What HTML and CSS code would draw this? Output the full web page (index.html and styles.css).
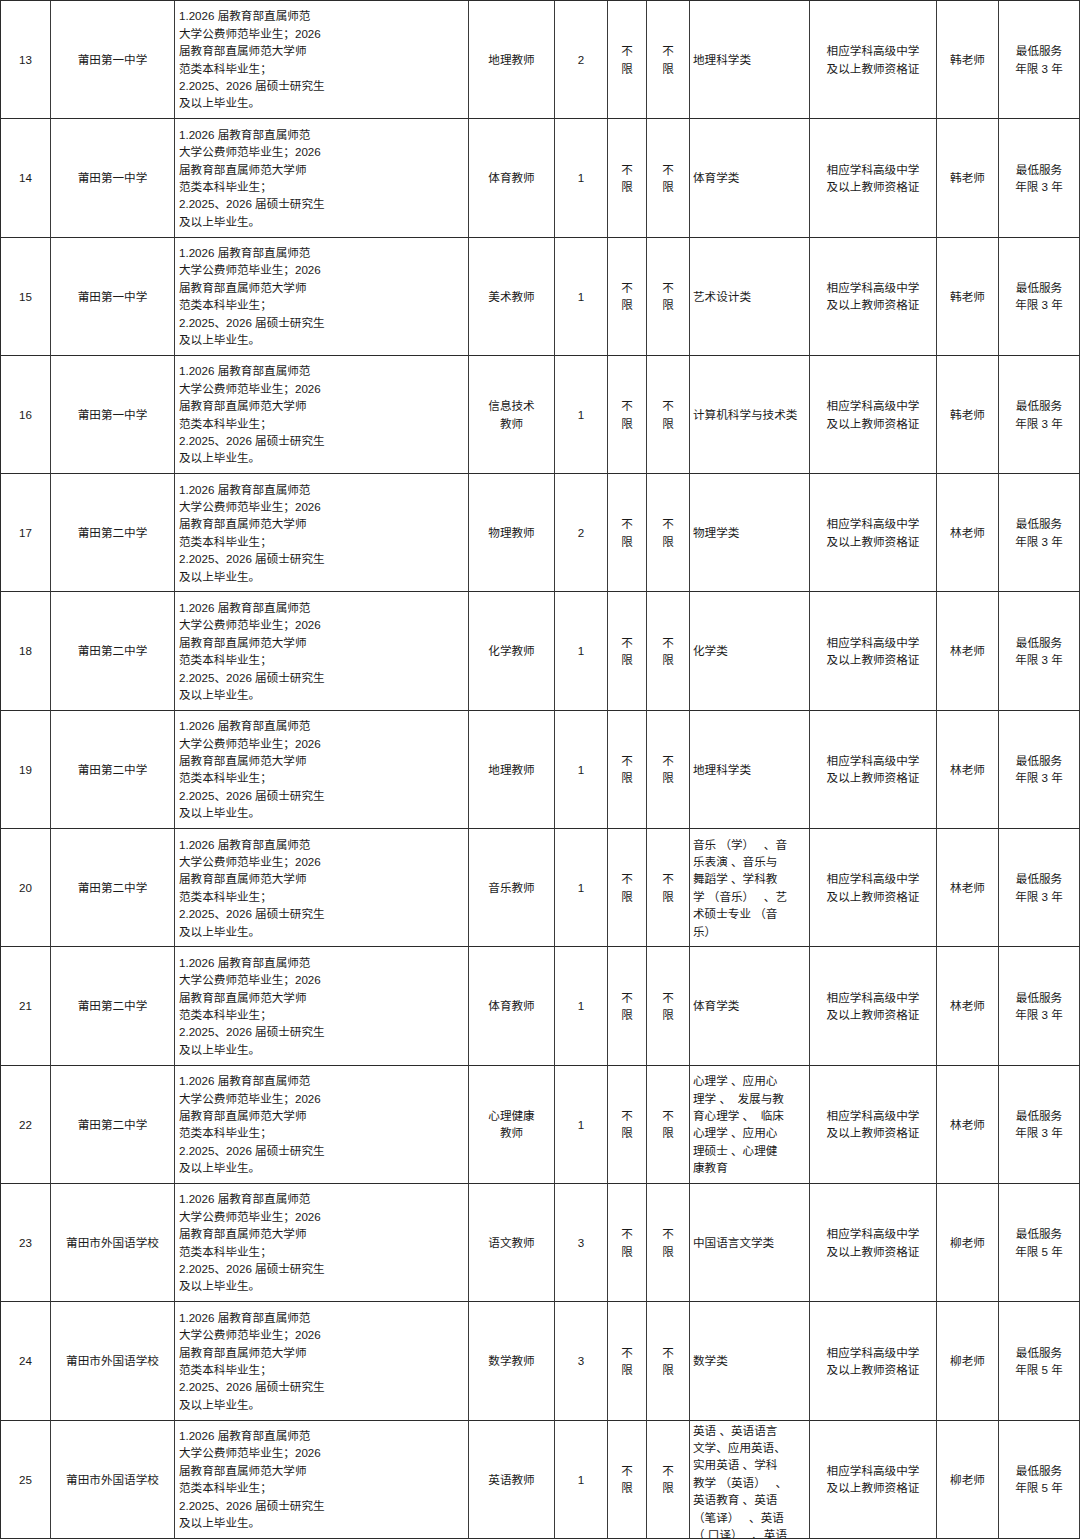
FILE: index.html
```html
<!DOCTYPE html>
<html lang="zh-CN">
<head>
<meta charset="utf-8">
<title>招聘岗位表</title>
<link rel="stylesheet" href="styles.css">
</head>
<body>
<div class="sheet">
  <!-- 13 -->
  <div class="c no">13</div>
  <div class="c school">莆田第一中学</div>
  <div class="c qual">1.2026 届教育部直属师范<br>大学公费师范毕业生；2026<br>届教育部直属师范大学师<br>范类本科毕业生；<br>2.2025、2026 届硕士研究生<br>及以上毕业生。</div>
  <div class="c pos">地理教师</div>
  <div class="c num">2</div>
  <div class="c lim">不<br>限</div>
  <div class="c lim">不<br>限</div>
  <div class="c major">地理科学类</div>
  <div class="c cert">相应学科高级中学<br>及以上教师资格证</div>
  <div class="c contact">韩老师</div>
  <div class="c note">最低服务<br>年限 3 年</div>
  <!-- 14 -->
  <div class="c no">14</div>
  <div class="c school">莆田第一中学</div>
  <div class="c qual">1.2026 届教育部直属师范<br>大学公费师范毕业生；2026<br>届教育部直属师范大学师<br>范类本科毕业生；<br>2.2025、2026 届硕士研究生<br>及以上毕业生。</div>
  <div class="c pos">体育教师</div>
  <div class="c num">1</div>
  <div class="c lim">不<br>限</div>
  <div class="c lim">不<br>限</div>
  <div class="c major">体育学类</div>
  <div class="c cert">相应学科高级中学<br>及以上教师资格证</div>
  <div class="c contact">韩老师</div>
  <div class="c note">最低服务<br>年限 3 年</div>
  <!-- 15 -->
  <div class="c no">15</div>
  <div class="c school">莆田第一中学</div>
  <div class="c qual">1.2026 届教育部直属师范<br>大学公费师范毕业生；2026<br>届教育部直属师范大学师<br>范类本科毕业生；<br>2.2025、2026 届硕士研究生<br>及以上毕业生。</div>
  <div class="c pos">美术教师</div>
  <div class="c num">1</div>
  <div class="c lim">不<br>限</div>
  <div class="c lim">不<br>限</div>
  <div class="c major">艺术设计类</div>
  <div class="c cert">相应学科高级中学<br>及以上教师资格证</div>
  <div class="c contact">韩老师</div>
  <div class="c note">最低服务<br>年限 3 年</div>
  <!-- 16 -->
  <div class="c no">16</div>
  <div class="c school">莆田第一中学</div>
  <div class="c qual">1.2026 届教育部直属师范<br>大学公费师范毕业生；2026<br>届教育部直属师范大学师<br>范类本科毕业生；<br>2.2025、2026 届硕士研究生<br>及以上毕业生。</div>
  <div class="c pos">信息技术<br>教师</div>
  <div class="c num">1</div>
  <div class="c lim">不<br>限</div>
  <div class="c lim">不<br>限</div>
  <div class="c major">计算机科学与技术类</div>
  <div class="c cert">相应学科高级中学<br>及以上教师资格证</div>
  <div class="c contact">韩老师</div>
  <div class="c note">最低服务<br>年限 3 年</div>
  <!-- 17 -->
  <div class="c no">17</div>
  <div class="c school">莆田第二中学</div>
  <div class="c qual">1.2026 届教育部直属师范<br>大学公费师范毕业生；2026<br>届教育部直属师范大学师<br>范类本科毕业生；<br>2.2025、2026 届硕士研究生<br>及以上毕业生。</div>
  <div class="c pos">物理教师</div>
  <div class="c num">2</div>
  <div class="c lim">不<br>限</div>
  <div class="c lim">不<br>限</div>
  <div class="c major">物理学类</div>
  <div class="c cert">相应学科高级中学<br>及以上教师资格证</div>
  <div class="c contact">林老师</div>
  <div class="c note">最低服务<br>年限 3 年</div>
  <!-- 18 -->
  <div class="c no">18</div>
  <div class="c school">莆田第二中学</div>
  <div class="c qual">1.2026 届教育部直属师范<br>大学公费师范毕业生；2026<br>届教育部直属师范大学师<br>范类本科毕业生；<br>2.2025、2026 届硕士研究生<br>及以上毕业生。</div>
  <div class="c pos">化学教师</div>
  <div class="c num">1</div>
  <div class="c lim">不<br>限</div>
  <div class="c lim">不<br>限</div>
  <div class="c major">化学类</div>
  <div class="c cert">相应学科高级中学<br>及以上教师资格证</div>
  <div class="c contact">林老师</div>
  <div class="c note">最低服务<br>年限 3 年</div>
  <!-- 19 -->
  <div class="c no">19</div>
  <div class="c school">莆田第二中学</div>
  <div class="c qual">1.2026 届教育部直属师范<br>大学公费师范毕业生；2026<br>届教育部直属师范大学师<br>范类本科毕业生；<br>2.2025、2026 届硕士研究生<br>及以上毕业生。</div>
  <div class="c pos">地理教师</div>
  <div class="c num">1</div>
  <div class="c lim">不<br>限</div>
  <div class="c lim">不<br>限</div>
  <div class="c major">地理科学类</div>
  <div class="c cert">相应学科高级中学<br>及以上教师资格证</div>
  <div class="c contact">林老师</div>
  <div class="c note">最低服务<br>年限 3 年</div>
  <!-- 20 -->
  <div class="c no">20</div>
  <div class="c school">莆田第二中学</div>
  <div class="c qual">1.2026 届教育部直属师范<br>大学公费师范毕业生；2026<br>届教育部直属师范大学师<br>范类本科毕业生；<br>2.2025、2026 届硕士研究生<br>及以上毕业生。</div>
  <div class="c pos">音乐教师</div>
  <div class="c num">1</div>
  <div class="c lim">不<br>限</div>
  <div class="c lim">不<br>限</div>
  <div class="c major pre">音乐 （学）   、音<br>乐表演 、音乐与<br>舞蹈学 、学科教<br>学 （音乐）   、艺<br>术硕士专业 （音<br>乐）</div>
  <div class="c cert">相应学科高级中学<br>及以上教师资格证</div>
  <div class="c contact">林老师</div>
  <div class="c note">最低服务<br>年限 3 年</div>
  <!-- 21 -->
  <div class="c no">21</div>
  <div class="c school">莆田第二中学</div>
  <div class="c qual">1.2026 届教育部直属师范<br>大学公费师范毕业生；2026<br>届教育部直属师范大学师<br>范类本科毕业生；<br>2.2025、2026 届硕士研究生<br>及以上毕业生。</div>
  <div class="c pos">体育教师</div>
  <div class="c num">1</div>
  <div class="c lim">不<br>限</div>
  <div class="c lim">不<br>限</div>
  <div class="c major">体育学类</div>
  <div class="c cert">相应学科高级中学<br>及以上教师资格证</div>
  <div class="c contact">林老师</div>
  <div class="c note">最低服务<br>年限 3 年</div>
  <!-- 22 -->
  <div class="c no">22</div>
  <div class="c school">莆田第二中学</div>
  <div class="c qual">1.2026 届教育部直属师范<br>大学公费师范毕业生；2026<br>届教育部直属师范大学师<br>范类本科毕业生；<br>2.2025、2026 届硕士研究生<br>及以上毕业生。</div>
  <div class="c pos">心理健康<br>教师</div>
  <div class="c num">1</div>
  <div class="c lim">不<br>限</div>
  <div class="c lim">不<br>限</div>
  <div class="c major pre">心理学 、应用心<br>理学 、  发展与教<br>育心理学 、  临床<br>心理学 、应用心<br>理硕士 、心理健<br>康教育</div>
  <div class="c cert">相应学科高级中学<br>及以上教师资格证</div>
  <div class="c contact">林老师</div>
  <div class="c note">最低服务<br>年限 3 年</div>
  <!-- 23 -->
  <div class="c no">23</div>
  <div class="c school">莆田市外国语学校</div>
  <div class="c qual">1.2026 届教育部直属师范<br>大学公费师范毕业生；2026<br>届教育部直属师范大学师<br>范类本科毕业生；<br>2.2025、2026 届硕士研究生<br>及以上毕业生。</div>
  <div class="c pos">语文教师</div>
  <div class="c num">3</div>
  <div class="c lim">不<br>限</div>
  <div class="c lim">不<br>限</div>
  <div class="c major">中国语言文学类</div>
  <div class="c cert">相应学科高级中学<br>及以上教师资格证</div>
  <div class="c contact">柳老师</div>
  <div class="c note">最低服务<br>年限 5 年</div>
  <!-- 24 -->
  <div class="c no">24</div>
  <div class="c school">莆田市外国语学校</div>
  <div class="c qual">1.2026 届教育部直属师范<br>大学公费师范毕业生；2026<br>届教育部直属师范大学师<br>范类本科毕业生；<br>2.2025、2026 届硕士研究生<br>及以上毕业生。</div>
  <div class="c pos">数学教师</div>
  <div class="c num">3</div>
  <div class="c lim">不<br>限</div>
  <div class="c lim">不<br>限</div>
  <div class="c major">数学类</div>
  <div class="c cert">相应学科高级中学<br>及以上教师资格证</div>
  <div class="c contact">柳老师</div>
  <div class="c note">最低服务<br>年限 5 年</div>
  <!-- 25 -->
  <div class="c no">25</div>
  <div class="c school">莆田市外国语学校</div>
  <div class="c qual">1.2026 届教育部直属师范<br>大学公费师范毕业生；2026<br>届教育部直属师范大学师<br>范类本科毕业生；<br>2.2025、2026 届硕士研究生<br>及以上毕业生。</div>
  <div class="c pos">英语教师</div>
  <div class="c num">1</div>
  <div class="c lim">不<br>限</div>
  <div class="c lim">不<br>限</div>
  <div class="c major pre top">英语 、英语语言<br>文学、应用英语、<br>实用英语 、学科<br>教学 （英语）   、<br>英语教育 、英语<br>（笔译）   、英语<br>（ 口译）   、英语</div>
  <div class="c cert">相应学科高级中学<br>及以上教师资格证</div>
  <div class="c contact">柳老师</div>
  <div class="c note">最低服务<br>年限 5 年</div>
</div>
</body>
</html>
```

FILE: styles.css
```css
html, body {
  margin: 0;
  padding: 0;
  background: #ffffff;
}

body {
  width: 1080px;
  height: 1539px;
  overflow: hidden;
  font-family: "Liberation Sans", "Noto Sans CJK SC", sans-serif;
  font-size: 11.6px;
  line-height: 17.4px;
  color: #1a1a1a;
}

.sheet {
  display: grid;
  grid-template-columns: 50px 124px 294px 86px 53px 39px 43px 120px 127px 62px 81px;
  grid-template-rows: repeat(13, 118.3px);
  border-top: 1px solid #2b2b2b;
  border-left: 1px solid #2b2b2b;
  width: 1079px;
}

.c {
  border-right: 1px solid #3a3a3a;
  border-bottom: 1px solid #2b2b2b;
  display: flex;
  align-items: center;
  justify-content: center;
  text-align: center;
  overflow: hidden;
  box-sizing: border-box;
}

.qual,
.major {
  justify-content: flex-start;
  text-align: left;
  padding-left: 3px;
}

.qual {
  padding-left: 4px;
}

.pre {
  white-space: pre;
}

.top {
  align-items: flex-start;
  padding-top: 1px;
}
```
